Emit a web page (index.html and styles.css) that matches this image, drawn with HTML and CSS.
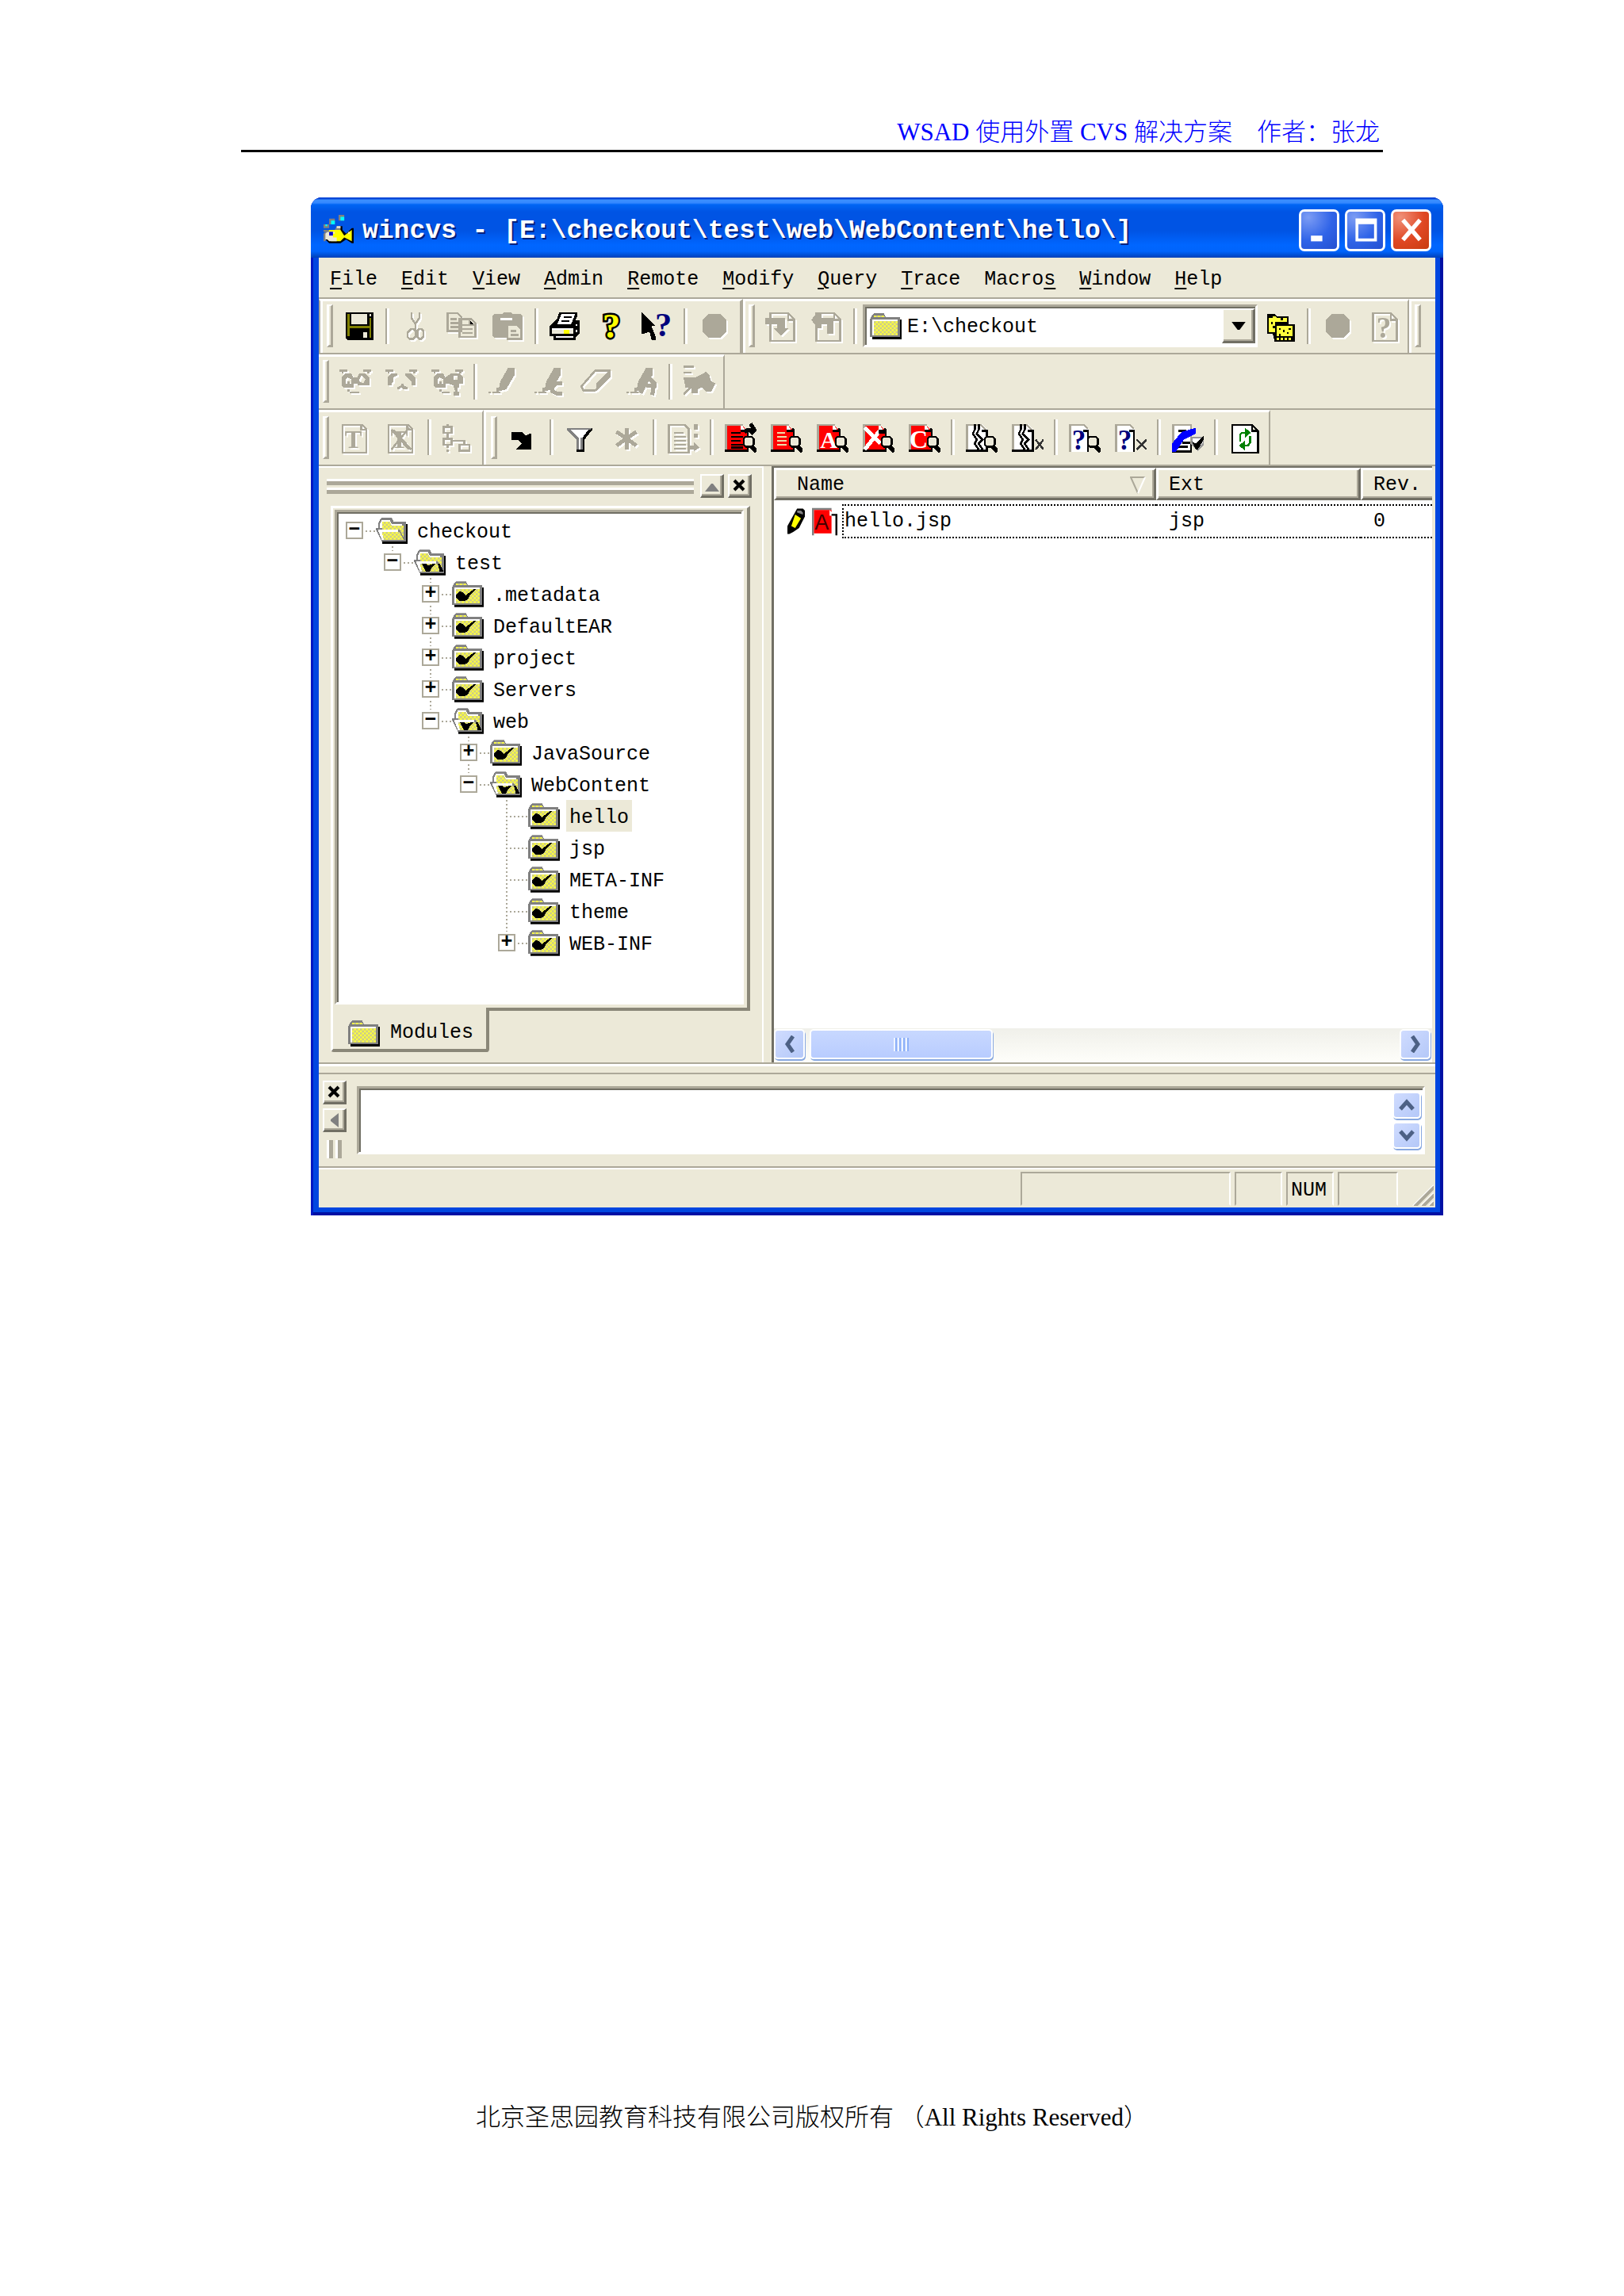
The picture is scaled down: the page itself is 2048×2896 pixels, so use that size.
FILE: index.html
```html
<!DOCTYPE html>
<html lang="zh-CN">
<head>
<meta charset="utf-8">
<meta name="viewport" content="width=device-width, initial-scale=1">
<title>WSAD 使用外置 CVS 解决方案</title>
<link rel="stylesheet" href="styles.css">
</head>
<body>
<svg class="sprite" width="0" height="0" aria-hidden="true">
  <defs>
    <pattern id="weave" width="2" height="2" patternUnits="userSpaceOnUse"><rect width="2" height="2" fill="#ffff3c"/><path fill="#c8c890" d="M0 0h1v1H0zM1 1h1v1H1z"/></pattern>
  </defs>
  <symbol id="folder" viewBox="0 0 16 13"><path d="M2 3h14v10H1v-1h14V3z"/><path fill="#808080" d="M0 3l1-2 1-1h5l1 2h7v10H0z"/><path fill="#fff" d="M1 3h13v8H1z"/><path fill="url(#weave)" d="M2 1h5l1 1H2zM2 4h12v7H2z"/></symbol>
  <symbol id="folder-check" viewBox="0 0 16 13"><use href="#folder" width="16" height="13"/><path d="M2 7l2-2 2 1 1 1 4-3h1l-3 3-1 2-2 1H4L2 8z"/></symbol>
  <symbol id="folder-open" viewBox="0 0 16 13"><path d="M3 11h11V3h2v10H3z"/><path fill="#808080" d="M1 3l1-2 1-1h5l1 2h6v10H3L0 6V5h1z"/><path fill="#fff" d="M2 3l1-2h4l1 2h5v2H2z"/><path fill="url(#weave)" d="M3 2h4l1 2h6v6l-2-4H3z"/><path fill="#fff" d="M1 6h10l2 5H3z"/><path fill="url(#weave)" d="M3 7h9l2 4H4z"/></symbol>
  <symbol id="folder-open-check" viewBox="0 0 16 13"><use href="#folder-open" width="16" height="13"/><path d="M4 7h2l1 1 3-1h1L9 9l-1 2H6zM12 7h1l2 4h-2z"/></symbol>
  <symbol id="fish" viewBox="0 0 16 16"><path fill="#808080" d="M3 2h3v3H3zM8 0h3v3H8zM0 5h3v2H0zM0 8h2v1H0z"/><path fill="#0ff" d="M4 3h2v2H4zM9 1h2v2H9zM1 5h1v1H1z"/><path d="M3 8h4l1-2h2v2l2 2 3-3h1v8h-1l-3-2-3 2H3l-2-2z"/><path fill="#808080" d="M0 10l2-2h4l1-2h2v2H7L2 9l-1 5H0z"/><path fill="#ff0" d="M3 8h6l2 3 4-3v6l-4-2-2 2H4l-2-2z"/><path fill="#ece9d8" d="M2 9h4v1H5v2h2v2H3l-1-1H1v-3zM7 6h2v1H7zM13 9h1v1h-1z"/><path fill="#00c" d="M3 9h2v2H3z"/></symbol>
  <symbol id="save" viewBox="0 0 16 16"><path d="M1 1h14v14H2l-1-1z"/><path fill="#808000" d="M2 2h1v6h10V4h1v10h-1V9H3v4H2z"/><path fill="#ece9d8" d="M4 2h8v5H4zM13 2h1v1h-1zM10 11h2v3h-2z"/></symbol>
  <symbol id="cut" viewBox="0 0 16 16"><path fill="none" stroke="currentColor" d="M5.500 1v3l2 3v3M9.500 1v3l-2 3M5.500 9.500h1l1 1v3l-1 1h-2l-1-1v-2zM9.500 9.500h1l1 1v3l-1 1h-1l-1-1v-3z"/></symbol>
  <symbol id="copy" viewBox="0 0 16 16"><path fill="#ece9d8" stroke="currentColor" d="M.5 1.500h5l2 2v7h-7zM6.500 4.500h6l2 2v7h-8z"/><path stroke="currentColor" d="M2 4.500h3M2 6.500h4M2 8.500h4M8 7.500h3M8 9.500h5M8 11.500h5M11.500 5v2.500H14"/></symbol>
  <symbol id="paste" viewBox="0 0 16 16"><path fill="currentColor" d="M0 3l1-1h4l1-1h3l1 1h4l1 1v11H1l-1-1z"/><path fill="#fff" d="M4 4h6v1H4z"/><path fill="#ece9d8" stroke="currentColor" d="M7.500 7.500h5l2 2v5h-7z"/><path stroke="currentColor" d="M9 10.500h3M9 12.500h4"/></symbol>
  <symbol id="print" viewBox="0 0 16 16"><path d="M5 1h9v2l-1 2h2v7l-2 2v1H2v-2H0V8l3-3 1-1z"/><path fill="#fff" d="M6 2h7l-2 5H4zM1 9h11v1H1zM3 13h9v1H3zM13 7h1v1h-1zM13 10h1v1h-1z"/><path fill="#ece9d8" d="M1 10h11v2H1z"/><path fill="#ff0" d="M7 10h3v2H7z"/><path stroke="#000" d="M7 3.500h4M6 5.500h4"/></symbol>
  <symbol id="pointer" viewBox="0 0 16 16"><path d="M0 1l7 7H5l2 5v2H5l-1-4-3 1H0z"/></symbol>
  <symbol id="disc" viewBox="0 0 16 16"><path fill="currentColor" d="M5 2h6l3 3v6l-3 3H5l-3-3V5z"/></symbol>
  <symbol id="page" viewBox="0 0 16 16"><path fill="none" stroke="currentColor" d="M2.500 1.500h9l3 3v11h-12zM11.500 2v3H14"/></symbol>
  <symbol id="page-in" viewBox="0 0 16 16"><use href="#page"/><path fill="currentColor" d="M0 4h10v5h2l-4 4-4-4h2V7H0z"/></symbol>
  <symbol id="page-out" viewBox="0 0 16 16"><use href="#page"/><path fill="currentColor" d="M0 5l3-4h2v3h6v8H8V7H5v2H3z"/></symbol>
  <symbol id="folders" viewBox="0 0 16 16"><path d="M1 2h4l1 1h6v4h3v9H5l-1-4H1z"/><path fill="#ffff3c" d="M2 4h2V3h1l1 1h5v2H5v5H2zM6 8h8v5H6z"/><path d="M3 6h1v1H3zM4 8h1v1H4zM7 9h1v1H7zM9 10h1v1H9zM12 9h1v1h-1zM7 12h1v1H7zM11 11h1v1h-1zM8 4h1v1H8z"/><path fill="#ffff3c" d="M6 14h1v1H6zM8 14h1v1H8zM10 14h1v1h-1zM12 14h1v1h-1z"/></symbol>
  <symbol id="eyes" viewBox="0 0 16 16"><path fill="currentColor" fill-rule="evenodd" d="M0 2h4v1H2v1H1V3H0zM12 2h4v1h-1v1h-1V3h-2zM3 4h3l1 2h2l1-2h3l2 2v4H9V9H7v2H2l-1-1V6zM4 6L3 7v2h1V8h1v1h1V7zM11 5l-1 2v1l2 1 1-2zM4 12h1v1h5v1H5v-1H4z"/></symbol>
  <symbol id="brows" viewBox="0 0 16 16"><path fill="currentColor" d="M0 2h4v1H2v1H1V3H0zM12 2h4v1h-1v1h-1V3h-2zM3 4h3v1L4 6v2L3 9v1H1V6zM10 4h3l2 2v4h-2V8l-2-2-1-1zM8 9h1v1l2 1v1H9l-1-1-1 1H6v-1l2-1z"/></symbol>
  <symbol id="eyes-run" viewBox="0 0 16 16"><path fill="currentColor" fill-rule="evenodd" d="M0 2h4v1H2v1H1V3H0zM12 2h4v1h-1v1h-1V3h-2zM3 4h3l1 2 3-2h4l2 2v3h-2v2h-1v2h1v2h-3v-2h1l-1-3-3-1H7v2H2l-1-1V6zM4 6L3 7v2h1V8h1v1h1V7zM11 5v2h2V5zM4 12h1v1h4v1H5v-1H4z"/></symbol>
  <symbol id="pencil" viewBox="0 0 16 16"><path fill="currentColor" d="M10 1h3v4l-4 7-4 1 1-5zM0 13h1v1H0zM2 13h4v1H2zM4 11h1v2H4z"/></symbol>
  <symbol id="pencil-c" viewBox="0 0 16 16"><use href="#pencil"/><path fill="none" stroke="currentColor" stroke-width="2" d="M14 9h-3l-2 2v2l2 1h3"/></symbol>
  <symbol id="pencil-a" viewBox="0 0 16 16"><use href="#pencil"/><path fill="none" stroke="currentColor" stroke-width="2" d="M7 14l4-8 3 3-1 6M10 10h5"/></symbol>
  <symbol id="eraser" viewBox="0 0 16 16"><path fill="none" stroke="currentColor" d="M.5 10.500l7-8h7v3l-7 7h-6z"/><path fill="currentColor" d="M8 9l7-7v4l-7 7z"/></symbol>
  <symbol id="puzzle" viewBox="0 0 16 16"><path stroke="currentColor" d="M0 .5h5M0 3.500h4M0 14.500l4-4"/><path fill="currentColor" d="M0 6h6l4-2 1-1 2 2 1 3 2 1-2 4h-3l-2-2-2 1v2H4v-3H1z"/></symbol>
  <symbol id="sheet" viewBox="0 0 16 16"><path fill="none" stroke="currentColor" d="M1.500 1.500h10l2 2v12h-12zM11 2v2h2"/></symbol>
  <symbol id="cross" viewBox="0 0 16 16"><path stroke="currentColor" d="M3 4l9 10M12 3L3 14M4 4l9 10"/></symbol>
  <symbol id="graph" viewBox="0 0 16 16"><path fill="none" stroke="currentColor" d="M.5 2.500h4v3h-4zM.5 8.500h4v3h-4zM8.500 11.500h5v3h-5zM2.500 1v1M2.500 6v2M5 9.500h6v2"/><path fill="currentColor" d="M2 12h1v1H2zM2 14h1v1H2z"/></symbol>
  <symbol id="corner" viewBox="0 0 16 16"><path d="M2 5h5l2 2 2-1h1v8H4l3-3-2-2H2z"/></symbol>
  <symbol id="funnel" viewBox="0 0 16 16"><path fill="#808080" d="M1 3h13v1l-5 5v6H6V9L1 4z"/><path fill="#fff" d="M3 4h9L9 8H8v6H7V8z"/><path d="M12 4h1l1-1v1l-4 5v6H6v-1h3V8z"/></symbol>
  <symbol id="star" viewBox="0 0 16 16"><path fill="none" stroke="currentColor" stroke-width="2" d="M8 3v11M3 5l10 7M13 5L3 12"/></symbol>
  <symbol id="page-list" viewBox="0 0 16 16"><path fill="none" stroke="currentColor" d="M.5 1.500h8l2 2v12H.5zM3 5.500h5M3 7.500h6M3 9.500h6M3 11.500h6M3 13.500h6"/><path fill="currentColor" d="M13 1h2v3h-2zM13 6h2v2h-2zM11 12h2v-2l3 3-3 2v-1h-2z"/></symbol>
  <symbol id="lens" viewBox="0 0 16 16"><path stroke="#000" stroke-width="2" d="M13 12l3 3"/><path fill="#ece9d8" stroke="#000" d="M10.500 7.500h3l1 1v3l-1 1h-3l-1-1v-3z"/></symbol>
  <symbol id="red" viewBox="0 0 16 16"><path d="M0 15h12V4l-1-1z"/><path fill="#f00" d="M1 2h8l2 2v10H1z"/><path fill="#aca899" d="M0 1h9v1H1v12H0z"/><path fill="#fff" d="M8 2h1l2 3H8z"/><path d="M8 4h4v5h-1V5H8zM0 14h12v1H0z"/></symbol>
  <symbol id="red-go" viewBox="0 0 16 16"><use href="#red"/><path stroke="#000" d="M3 5.500h5M3 7.500h6M3 9.500h5M3 11.500h6M3 13h6"/><path fill="none" stroke="#000" stroke-width="2" d="M10 5l2-1h3M13 1l2 3-2 2"/><use href="#lens"/></symbol>
  <symbol id="red-list" viewBox="0 0 16 16"><use href="#red"/><path stroke="#eda" d="M3 5.500h4M3 7.500h5M3 9.500h5M3 11.500h5"/><use href="#lens"/></symbol>
  <symbol id="red-x" viewBox="0 0 16 16"><use href="#red"/><path stroke="#fff" stroke-width="2" d="M1 3l8 8M9 4L1 14"/><path d="M8 4h4v2H8z"/><use href="#lens"/></symbol>
  <symbol id="torn" viewBox="0 0 16 16"><path fill="#fff" d="M0 1h8l3 3v11H0z"/><path fill="none" stroke="#aca899" d="M.5 14V1.500h7l3 3"/><path d="M0 14h11v1H0z"/><path fill="none" stroke="#000" d="M4.500 1v3l-1 2 2 3-1 2 2 3M6.500 1v3l-1 2 3 3-2 2 2 3M8 4.500h2.500V14"/></symbol>
  <symbol id="torn-lens" viewBox="0 0 16 16"><use href="#torn"/><use href="#lens"/></symbol>
  <symbol id="torn-x" viewBox="0 0 16 16"><use href="#torn"/><path stroke="#333" d="M12 9l4 5M16 9l-4 5"/></symbol>
  <symbol id="blank" viewBox="0 0 16 16"><path fill="#fff" d="M0 1h7l3 3v11H0z"/><path fill="none" stroke="#aca899" d="M.5 15V1.500h7l2 2"/><path d="M7 4h3v11H9V5H7z"/></symbol>
  <symbol id="small-x" viewBox="0 0 16 16"><path stroke="#333" d="M11 9l5 5M16 9l-5 5"/></symbol>
  <symbol id="commit" viewBox="0 0 16 16"><path fill="#fff" stroke="#aca899" d="M.5 15V1.500h9V15"/><path stroke="#000" d="M3 4.500h4M2 12.500h6M0 15h10M5 10.500h4M9.500 11v4"/><path fill="#00f" d="M12 3v3l-6 3-4 6H0v-4l5-6z"/><path fill="#fff" stroke="#999" d="M10 8h6v3l-3 3-3-3z"/><path d="M10 10l2 1 4-4v2l-3 5h-1z"/></symbol>
  <symbol id="refresh" viewBox="0 0 16 16"><path fill="#fff" stroke="#000" d="M1.500 1.500h10l3 3v11h-13zM11.500 2v2.500H14"/><path fill="none" stroke="#008000" d="M5.500 10V6.500l1-1H10M10.500 7v3.500l-1 1.500H6"/><path fill="#008000" d="M8 3l3 2.500L8 8zM8 9.500v5L5 12z"/></symbol>
  <symbol id="edit" viewBox="0 0 9 13"><path d="M5 0h3l1 1v3L6 10l-3 2-2 1H0V9z"/><path fill="#ff0" d="M4 3l3 2-3 5-2-1z"/><path fill="#808080" d="M5 1h2l1 1v1L5 2z"/></symbol>
</svg>

<header class="page-head">WSAD 使用外置 CVS 解决方案　作者：张龙</header>

<main class="window">
  <div class="titlebar">
    <svg class="app-icon" aria-hidden="true"><use href="#fish"/></svg>
    <h1>wincvs - [E:\checkout\test\web\WebContent\hello\]</h1>
    <button class="caption" aria-label="Minimize"><svg viewBox="0 0 20 20"><path fill="#fff" d="M4 14h8v4H4z"/></svg></button>
    <button class="caption" aria-label="Maximize"><svg viewBox="0 0 20 20"><path fill="#fff" fill-rule="evenodd" d="M3 2h15v16H3zM5 6v10h11V6z"/></svg></button>
    <button class="caption close" aria-label="Close"><svg viewBox="0 0 20 20"><path stroke="#fff" stroke-width="3" d="M4 3l12 14M16 3L4 17"/></svg></button>
  </div>

  <div class="client">
    <nav class="menu">
      <button><u>F</u>ile</button><button><u>E</u>dit</button><button><u>V</u>iew</button><button><u>A</u>dmin</button><button><u>R</u>emote</button><button><u>M</u>odify</button><button><u>Q</u>uery</button><button><u>T</u>race</button><button>Macro<u>s</u></button><button><u>W</u>indow</button><button><u>H</u>elp</button>
    </nav>

    <div class="rebar">
      <div class="band band-first">
        <i class="grip"></i>
        <button class="tool" aria-label="Save"><svg><use href="#save"/></svg></button>
        <i class="sep"></i>
        <button class="tool" disabled aria-label="Cut"><svg><use href="#cut"/></svg></button>
        <button class="tool" disabled aria-label="Copy"><svg><use href="#copy"/></svg></button>
        <button class="tool" disabled aria-label="Paste"><svg><use href="#paste"/></svg></button>
        <i class="sep"></i>
        <button class="tool" aria-label="Print"><svg><use href="#print"/></svg></button>
        <button class="tool" aria-label="About"><svg viewBox="0 0 16 16"><text class="glyph" x="8" y="14" text-anchor="middle" font-size="18" fill="#ff0" stroke="#000" stroke-width="2" paint-order="stroke">?</text></svg></button>
        <button class="tool" aria-label="Context help"><svg viewBox="0 0 16 16"><use href="#pointer"/><text class="glyph" x="11" y="13" text-anchor="middle" font-size="17" fill="#00007c">?</text></svg></button>
        <i class="sep"></i>
        <button class="tool" disabled aria-label="Stop"><svg><use href="#disc"/></svg></button>
      </div>
      <div class="band band-wide">
        <i class="grip"></i>
        <button class="tool" disabled aria-label="Check in"><svg><use href="#page-in"/></svg></button>
        <button class="tool" disabled aria-label="Check out"><svg><use href="#page-out"/></svg></button>
        <i class="sep"></i>
        <div class="combo">
          <svg class="folder" aria-hidden="true"><use href="#folder"/></svg>
          <select aria-label="Location"><option>E:\checkout</option></select>
          <span class="drop" aria-hidden="true"><svg viewBox="0 0 7 4"><path d="M0 0h7L4 4H3z"/></svg></span>
        </div>
        <button class="tool" aria-label="Browse location"><svg><use href="#folders"/></svg></button>
        <i class="sep"></i>
        <button class="tool" disabled aria-label="Stop command"><svg><use href="#disc"/></svg></button>
        <button class="tool" disabled aria-label="Query page"><svg viewBox="0 0 16 16"><use href="#page"/><text class="glyph" x="8" y="14" text-anchor="middle" font-size="15" fill="currentColor">?</text></svg></button>
      </div>
      <div class="band band-end"><i class="grip"></i></div>
    </div>

    <div class="rebar">
      <div class="band">
        <i class="grip"></i>
        <button class="tool" disabled aria-label="Watch on"><svg><use href="#eyes"/></svg></button>
        <button class="tool" disabled aria-label="Watch off"><svg><use href="#brows"/></svg></button>
        <button class="tool" disabled aria-label="Watchers"><svg><use href="#eyes-run"/></svg></button>
        <i class="sep"></i>
        <button class="tool" disabled aria-label="Edit"><svg><use href="#pencil"/></svg></button>
        <button class="tool" disabled aria-label="Reserved edit"><svg><use href="#pencil-c"/></svg></button>
        <button class="tool" disabled aria-label="Unedit"><svg><use href="#eraser"/></svg></button>
        <button class="tool" disabled aria-label="Editors"><svg><use href="#pencil-a"/></svg></button>
        <i class="sep"></i>
        <button class="tool" disabled aria-label="Release"><svg><use href="#puzzle"/></svg></button>
      </div>
    </div>

    <div class="rebar rebar-last">
      <div class="band">
        <i class="grip"></i>
        <button class="tool" disabled aria-label="Create tag"><svg viewBox="0 0 16 16"><use href="#sheet"/><text class="glyph" x="7" y="13" text-anchor="middle" font-size="13" fill="currentColor">T</text></svg></button>
        <button class="tool" disabled aria-label="Delete tag"><svg viewBox="0 0 16 16"><use href="#sheet"/><text class="glyph" x="7" y="13" text-anchor="middle" font-size="13" fill="currentColor">T</text><use href="#cross"/></svg></button>
        <i class="sep"></i>
        <button class="tool" disabled aria-label="Graph"><svg><use href="#graph"/></svg></button>
      </div>
      <div class="band">
        <i class="grip"></i>
        <button class="tool" aria-label="Flat view"><svg><use href="#corner"/></svg></button>
        <i class="sep"></i>
        <button class="tool" aria-label="Filter"><svg><use href="#funnel"/></svg></button>
        <button class="tool" disabled aria-label="Show all"><svg><use href="#star"/></svg></button>
        <i class="sep"></i>
        <button class="tool" disabled aria-label="File list"><svg><use href="#page-list"/></svg></button>
        <i class="sep"></i>
        <button class="tool" aria-label="Show changed"><svg><use href="#red-go"/></svg></button>
        <button class="tool" aria-label="Show modified"><svg><use href="#red-list"/></svg></button>
        <button class="tool" aria-label="Show added"><svg viewBox="0 0 16 16"><use href="#red"/><text class="glyph" x="6" y="13" text-anchor="middle" font-size="12" fill="#fff">A</text><use href="#lens"/></svg></button>
        <button class="tool" aria-label="Show removed"><svg><use href="#red-x"/></svg></button>
        <button class="tool" aria-label="Show conflicts"><svg viewBox="0 0 16 16"><use href="#red"/><text class="glyph" x="5" y="13" text-anchor="middle" font-size="13" fill="#fff">C</text><use href="#lens"/></svg></button>
        <i class="sep"></i>
        <button class="tool" aria-label="Show missing"><svg><use href="#torn-lens"/></svg></button>
        <button class="tool" aria-label="Hide missing"><svg><use href="#torn-x"/></svg></button>
        <i class="sep"></i>
        <button class="tool" aria-label="Show unknown"><svg viewBox="0 0 16 16"><use href="#blank"/><text class="glyph" x="5" y="14" text-anchor="middle" font-size="14" fill="#00007c">?</text><use href="#lens"/></svg></button>
        <button class="tool" aria-label="Hide unknown"><svg viewBox="0 0 16 16"><use href="#blank"/><text class="glyph" x="5" y="14" text-anchor="middle" font-size="14" fill="#00007c">?</text><use href="#small-x"/></svg></button>
        <i class="sep"></i>
        <button class="tool" aria-label="Commit options"><svg><use href="#commit"/></svg></button>
        <i class="sep"></i>
        <button class="tool" aria-label="Refresh"><svg><use href="#refresh"/></svg></button>
      </div>
    </div>

    <div class="split">
      <aside class="dock">
        <div class="dock-head">
          <div class="bars"><i></i><i></i></div>
          <button class="mini" aria-label="Expand panel"><svg viewBox="0 0 9 9"><path fill="#808080" d="M0 8l4-5h1l4 5z"/></svg></button>
          <button class="mini" aria-label="Close panel"><svg viewBox="0 0 9 9"><path stroke="#000" stroke-width="2" d="M1 1l6 6M7 1L1 7"/></svg></button>
        </div>
        <div class="sheet">
          <ul class="tree">
            <li>
              <div class="row"><button class="box" aria-label="Collapse">−</button><svg class="folder"><use href="#folder-open"/></svg><span>checkout</span></div>
              <ul>
                <li>
                  <div class="row"><button class="box" aria-label="Collapse">−</button><svg class="folder"><use href="#folder-open-check"/></svg><span>test</span></div>
                  <ul>
                    <li><div class="row"><button class="box" aria-label="Expand">+</button><svg class="folder"><use href="#folder-check"/></svg><span>.metadata</span></div></li>
                    <li><div class="row"><button class="box" aria-label="Expand">+</button><svg class="folder"><use href="#folder-check"/></svg><span>DefaultEAR</span></div></li>
                    <li><div class="row"><button class="box" aria-label="Expand">+</button><svg class="folder"><use href="#folder-check"/></svg><span>project</span></div></li>
                    <li><div class="row"><button class="box" aria-label="Expand">+</button><svg class="folder"><use href="#folder-check"/></svg><span>Servers</span></div></li>
                    <li>
                      <div class="row"><button class="box" aria-label="Collapse">−</button><svg class="folder"><use href="#folder-open-check"/></svg><span>web</span></div>
                      <ul>
                        <li><div class="row"><button class="box" aria-label="Expand">+</button><svg class="folder"><use href="#folder-check"/></svg><span>JavaSource</span></div></li>
                        <li>
                          <div class="row"><button class="box" aria-label="Collapse">−</button><svg class="folder"><use href="#folder-open-check"/></svg><span>WebContent</span></div>
                          <ul>
                            <li><div class="row leaf"><svg class="folder"><use href="#folder-check"/></svg><span class="selected">hello</span></div></li>
                            <li><div class="row leaf"><svg class="folder"><use href="#folder-check"/></svg><span>jsp</span></div></li>
                            <li><div class="row leaf"><svg class="folder"><use href="#folder-check"/></svg><span>META-INF</span></div></li>
                            <li><div class="row leaf"><svg class="folder"><use href="#folder-check"/></svg><span>theme</span></div></li>
                            <li><div class="row"><button class="box" aria-label="Expand">+</button><svg class="folder"><use href="#folder-check"/></svg><span>WEB-INF</span></div></li>
                          </ul>
                        </li>
                      </ul>
                    </li>
                  </ul>
                </li>
              </ul>
            </li>
          </ul>
        </div>
        <button class="tab"><svg class="folder" aria-hidden="true"><use href="#folder"/></svg>Modules</button>
      </aside>

      <section class="files">
        <table>
          <colgroup><col class="c-name"><col class="c-ext"><col></colgroup>
          <thead><tr>
            <th><div class="th-in">Name<svg class="sort" viewBox="0 0 20 22" aria-hidden="true"><path fill="none" stroke="#aca899" stroke-width="2" d="M19 1H1l9 20"/><path fill="none" stroke="#fff" stroke-width="2" d="M10 21l9-20"/></svg></div></th>
            <th>Ext</th>
            <th>Rev.</th>
          </tr></thead>
          <tbody><tr>
            <td><div class="name-cell"><svg class="edit" aria-hidden="true"><use href="#edit"/></svg><svg class="kind" viewBox="0 0 13 14" aria-hidden="true"><path fill="#808080" d="M0 0h10v1H1v13H0z"/><path fill="#f00" d="M1 1h9v12H1z"/><path fill="#fff" d="M9 1l3 3v10h-1V4H9z"/><path d="M10 3h3v11h-1V4h-2z"/><text class="plain" x="5" y="11" text-anchor="middle" font-size="11" fill="#400">A</text></svg><span class="focus first">hello.jsp</span></div></td>
            <td><span class="focus">jsp</span></td>
            <td><span class="focus">0</span></td>
          </tr></tbody>
        </table>
        <div class="hscroll">
          <button class="arrow" aria-label="Scroll left"><svg viewBox="0 0 12 22"><path d="M10 1L3 11l7 10"/></svg></button>
          <div class="thumb"><i></i></div>
          <button class="arrow" aria-label="Scroll right"><svg viewBox="0 0 12 22"><path d="M2 1l7 10-7 10"/></svg></button>
        </div>
      </section>
    </div>

    <section class="output">
      <div class="side">
        <button class="mini" aria-label="Close output"><svg viewBox="0 0 9 9"><path stroke="#000" stroke-width="2" d="M1 1l6 6M7 1L1 7"/></svg></button>
        <button class="mini" aria-label="Shrink output"><svg viewBox="0 0 9 9"><path fill="#808080" d="M7 0v9L2 5V4z"/></svg></button>
        <div class="vbars"><i></i><i></i></div>
      </div>
      <div class="console">
        <textarea aria-label="Output"></textarea>
        <div class="vscroll">
          <button class="arrow" aria-label="Scroll up"><svg viewBox="0 0 22 16"><path d="M3 13l8-9 8 9"/></svg></button>
          <button class="arrow" aria-label="Scroll down"><svg viewBox="0 0 22 16"><path d="M3 3l8 9 8-9"/></svg></button>
        </div>
      </div>
    </section>

    <div class="status">
      <span class="pane p-long"></span><span class="pane"></span><span class="pane">NUM</span><span class="pane p-last"></span>
      <svg class="size" viewBox="0 0 28 28" aria-hidden="true"><path stroke="#fff" stroke-width="2" d="M2 28L28 2M12 28L28 12M22 28l6-6"/><path stroke="#aca899" stroke-width="4" d="M4 29L29 4M14 29L29 14M24 29l5-5"/></svg>
    </div>
  </div>
</main>

<footer class="page-foot">北京圣思园教育科技有限公司版权所有 （All Rights Reserved）</footer>
</body>
</html>
```
FILE: styles.css
```css
:root {
  --face: #ece9d8;
  --shade: #aca899;
  --dark: #716f64;
  --mono: "Liberation Mono", "Noto Sans CJK SC", monospace;
}
* { box-sizing: border-box; }
body {
  margin: 0;
  min-height: 100vh;
  display: flex;
  flex-direction: column;
  background: #fff;
  color: #000;
  font: 300 31px/40px "Liberation Serif", "Noto Sans CJK SC", serif;
}
.sprite { position: absolute; }
svg { display: block; flex: none; }
button, select, textarea { font: inherit; color: inherit; margin: 0; padding: 0; border: 0; border-radius: 0; background: none; }
ul { list-style: none; margin: 0; padding: 0; }
.glyph { font-family: "Liberation Serif", serif; font-weight: 700; }
.plain { font-family: "Liberation Sans", sans-serif; }

.page-head {
  margin: 0 304px;
  padding: 147px 4px 2px 0;
  border-bottom: 3px solid #000;
  text-align: right;
  color: #00f;
}
.page-foot { margin-top: auto; padding-bottom: 205px; text-align: center; }

/* window frame */
.window {
  margin: 57px 228px 40px 392px;
  padding-bottom: 10px;
  border-radius: 14px 14px 0 0;
  background: #0046e0;
  box-shadow: inset 3px 0 #0018c4, inset -4px 0 #0010a4, inset 0 -4px #0010a4;
  font: 400 25px/30px var(--mono);
}
.titlebar {
  display: flex;
  align-items: center;
  gap: 7px;
  height: 76px;
  padding: 6px 15px 0 16px;
  border-radius: 14px 14px 0 0;
  background: linear-gradient(#0a48d8 0, #0a48d8 2px, #3c90ff 3px, #3488ff 7px, #0066f4 9px, #0054e4 18px, #0054e4 42px, #0066ff 60px, #0064fc 68px, #0040b8 76px);
}
.app-icon { width: 38px; height: 38px; }
.titlebar h1 {
  flex: 1;
  margin: 0;
  padding: 4px 0 0 4px;
  font: 700 33px/40px var(--mono);
  color: #fff;
  text-shadow: 2px 2px #00207c;
  white-space: nowrap;
}
.caption {
  display: grid;
  place-items: center;
  width: 51px;
  height: 53px;
  border: 3px solid #fff;
  border-radius: 7px;
  background: radial-gradient(circle at 20% 15%, #7c9cf4, #3064e8 55%, #2450d0);
}
.caption svg { width: 36px; height: 36px; }
.caption.close { background: radial-gradient(circle at 20% 15%, #f09078, #e04824 55%, #c83c10); }
.client { margin: 0 10px; background: var(--face); }

.menu { display: flex; gap: 30px; height: 50px; padding: 10px 14px 4px; }
.menu button { line-height: 36px; }
.menu u { text-decoration-thickness: 2px; text-underline-offset: 4px; }

/* toolbars */
.rebar { display: flex; height: 70px; border-top: 2px solid var(--shade); }
.band {
  display: flex;
  align-items: center;
  padding: 0 1px 3px 5px;
  border-top: 3px solid #fff;
  border-right: 2px solid var(--shade);
}
.band + .band { box-shadow: inset 3px 0 #fff; padding-left: 7px; }
.band-first { border-left: 2px solid var(--shade); box-shadow: inset 3px 0 #fff; padding: 0 3px 3px 8px; border-right-width: 4px; }
.band-wide { flex: 1; }
.band-end { width: 33px; }
.rebar .band-end:last-child { border-right: 0; }
.rebar-last { height: 71px; }
.rebar-last .band + .band { padding-left: 9px; }
.grip { width: 8px; height: 54px; margin-right: 4px; border: solid; border-width: 2px 3px 3px 3px; border-color: #fff var(--shade) var(--shade) #fff; }
.tool { display: grid; place-items: center; width: 58px; height: 50px; flex: none; }
.tool svg { width: 40px; height: 40px; shape-rendering: crispEdges; }
.tool:disabled { color: var(--shade); }
.tool:disabled svg { filter: drop-shadow(2px 2px 0 #fff); }
.sep { flex: none; width: 5px; height: 45px; margin: 0 5px 0 4px; border-left: 2px solid var(--shade); border-right: 3px solid #fff; }
.folder { width: 40px; height: 33px; shape-rendering: crispEdges; }
.combo {
  flex: 1;
  display: flex;
  align-items: center;
  height: 54px;
  margin-left: 2px;
  padding-left: 6px;
  border: solid;
  border-width: 3px;
  border-color: var(--shade) #fff #fff var(--shade);
  background: #fff;
  box-shadow: inset 2px 2px var(--dark);
}
.combo select { appearance: none; flex: 1; min-width: 0; height: 40px; padding: 4px 0 0 7px; outline: 0; }
.drop, .mini {
  display: grid;
  place-items: center;
  background: var(--face);
  border: solid;
  border-width: 2px 3px 3px 2px;
  border-color: #fff var(--dark) var(--dark) #fff;
  box-shadow: inset -2px -2px var(--shade);
}
.drop { width: 42px; height: 44px; pointer-events: none; }
.drop svg { width: 18px; height: 10px; }
.mini { width: 30px; height: 30px; flex: none; }
.mini svg { width: 18px; height: 18px; }

/* module tree */
.split {
  display: grid;
  grid-template-columns: 571px 1fr;
  border-top: 2px solid var(--shade);
  border-bottom: 2px solid var(--shade);
}
.dock { margin-right: 10px; padding: 8px 0 13px; border-top: 2px solid #fff; border-right: 2px solid #fff; }
.dock-head { display: flex; gap: 5px; padding: 0 13px 0 10px; }
.bars { flex: 1; display: flex; flex-direction: column; gap: 3px; padding: 6px 3px 0 0; }
.bars i { height: 8px; border-top: 3px solid #fff; border-bottom: 5px solid var(--shade); }
.sheet {
  margin: 10px 15px 0;
  padding: 2px 4px 4px 2px;
  border: solid;
  border-width: 3px 4px 4px 3px;
  border-color: #fff #8a8778 #8a8778 #fff;
}
.tree {
  min-height: 624px;
  padding: 3px 11px;
  border: 3px solid;
  border-color: var(--shade) #fff #fff var(--shade);
  box-shadow: inset 2px 2px var(--dark);
  background: #fff;
}
.tree ul { padding-left: 48px; }
.tree ul > li { background: repeating-linear-gradient(var(--shade) 0 2px, transparent 2px 5px) 10px 0 / 2px 100% no-repeat; }
.tree ul > li:last-child { background-size: 2px 20px; }
.row {
  display: flex;
  align-items: center;
  height: 40px;
  background: repeating-linear-gradient(90deg, var(--shade) 0 2px, transparent 2px 5px) 10px 20px / 30px 2px no-repeat;
}
.row.leaf { padding-left: 38px; }
.row span { height: 40px; margin-left: 8px; padding: 0 4px; line-height: 46px; white-space: nowrap; }
.row .selected { background: var(--face); }
.box {
  width: 22px;
  height: 22px;
  margin-right: 16px;
  border: 2px solid var(--shade);
  background: #fff;
  box-shadow: 0 0 0 3px #fff;
  font-weight: 700;
  line-height: 18px;
}
.tab {
  display: flex;
  align-items: center;
  gap: 13px;
  width: 200px;
  height: 56px;
  margin: -4px 15px 0;
  padding: 12px 0 0 19px;
  border: solid;
  border-width: 0 4px 4px 3px;
  border-color: #8a8778 #8a8778 #8a8778 #fff;
  border-radius: 0 0 4px 4px;
  background: var(--face);
  position: relative;
  line-height: 36px;
}

/* file list */
.files {
  display: flex;
  flex-direction: column;
  margin-right: 4px;
  border-left: 3px solid var(--dark);
  border-top: 2px solid var(--dark);
  background: #fff;
}
table { width: 100%; table-layout: fixed; border-spacing: 0; }
.c-name { width: 482px; }
.c-ext { width: 258px; }
th {
  height: 41px;
  padding: 2px 10px 0 13px;
  border: 3px solid;
  border-color: #fff var(--dark) var(--dark) #fff;
  background: var(--face);
  box-shadow: inset -2px -2px var(--shade);
  font-weight: 400;
  text-align: left;
}
th:first-child { padding-left: 26px; }
th:last-child { border-right: 0; box-shadow: inset 0 -2px var(--shade); }
.th-in { display: flex; justify-content: space-between; align-items: center; }
.sort { width: 20px; height: 22px; }
td { padding: 5px 0 0; }
.name-cell { display: flex; align-items: center; padding-left: 17px; }
.edit { width: 22px; height: 33px; margin-right: 9px; }
.kind { width: 32px; height: 36px; margin-right: 6px; }
.focus { display: block; height: 43px; padding-left: 16px; border: dotted #000; border-width: 2px 0; line-height: 40px; }
.focus.first { flex: 1; padding-left: 1px; border-left-width: 2px; }
.hscroll {
  display: flex;
  gap: 6px;
  height: 43px;
  margin-top: auto;
  padding: 1px 2px 2px 0;
  background: linear-gradient(#f0f0ea, #fefefa);
}
.arrow, .thumb {
  display: grid;
  place-items: center;
  width: 39px;
  border: 2px solid #fff;
  border-radius: 5px;
  background: linear-gradient(135deg, #d0dcff, #b4c8f8);
  box-shadow: 1px 2px #88a8e0;
}
.arrow path { fill: none; stroke: #4d6185; stroke-width: 5; }
.hscroll .arrow { height: 38px; }
.hscroll .arrow svg { width: 12px; height: 22px; }
.hscroll .arrow:last-child { margin-left: auto; }
.thumb { width: 231px; height: 38px; background: linear-gradient(#c8d8ff, #b8ccff); }
.thumb i { width: 20px; height: 17px; background: repeating-linear-gradient(90deg, #eef4ff 0 2px, #8cb0f8 2px 4px, transparent 4px 5px); }

/* output and status */
.output {
  display: flex;
  align-items: flex-start;
  gap: 13px;
  padding: 8px 13px 10px 5px;
  border-top: 3px solid #fff;
  background: linear-gradient(var(--face) 8px, var(--shade) 8px, var(--shade) 10px, var(--face) 10px);
}
.side { display: flex; flex-direction: column; gap: 5px; padding-top: 10px; }
.vbars { display: flex; gap: 3px; padding: 5px 5px 0; }
.vbars i { width: 8px; height: 23px; border-left: 3px solid #fff; border-right: 5px solid var(--shade); }
.console {
  flex: 1;
  display: flex;
  height: 86px;
  margin-top: 17px;
  border: 3px solid;
  border-color: var(--shade) #fff #fff var(--shade);
  background: #fff;
  box-shadow: inset 2px 2px var(--dark);
}
.console textarea { flex: 1; align-self: stretch; margin: 2px 0 0 2px; resize: none; outline: 0; overflow: hidden; }
.vscroll { display: flex; flex-direction: column; gap: 4px; padding: 4px 2px 3px; }
.vscroll .arrow { width: 36px; height: 34px; }
.vscroll .arrow svg { width: 22px; height: 16px; }
.status {
  display: flex;
  justify-content: flex-end;
  gap: 5px;
  height: 52px;
  padding: 5px 2px 2px;
  border-top: 2px solid var(--shade);
  box-shadow: inset 0 2px #fff;
}
.pane { width: 60px; padding: 7px 0 0 4px; border: 2px solid; border-color: var(--shade) #fff var(--face) var(--shade); }
.p-long { width: 265px; }
.p-last { width: 76px; }
.size { width: 28px; height: 28px; margin: auto 0 0 12px; }
```
